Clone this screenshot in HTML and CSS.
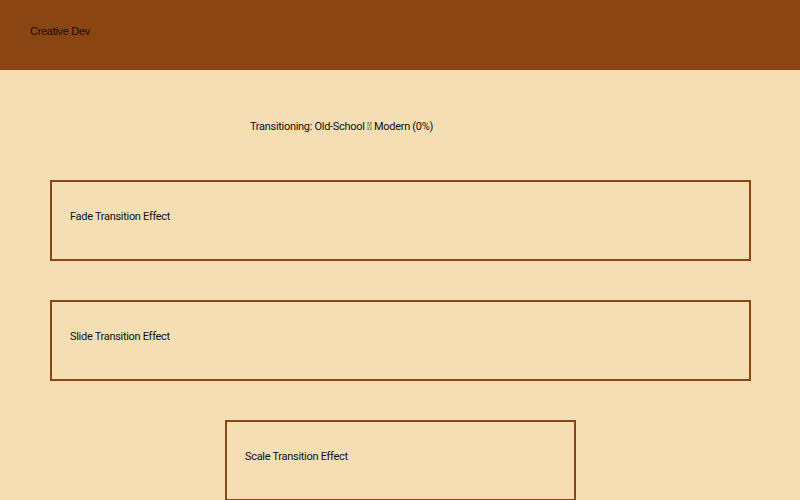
FILE: index.html
```html
<!DOCTYPE html>
<html>
<head>
<meta charset="utf-8">
<link rel="stylesheet" href="styles.css">
</head>
<body>
<header class="header"><span class="logo">Creative Dev</span></header>
<main class="main">
  <div class="status">Transitioning: Old-School &#xE000; Modern (0%)</div>
  <div class="box wide">Fade Transition Effect</div>
  <div class="box wide">Slide Transition Effect</div>
  <div class="box narrow">Scale Transition Effect</div>
</main>
</body>
</html>
```
FILE: styles.css
```css
html, body { margin: 0; padding: 0; }
body {
  background: #F5DEB3;
  font-family: Roboto, "Liberation Sans", sans-serif;
  font-size: 11px;
  letter-spacing: -0.3px;
  color: #111;
  width: 800px;
  height: 500px;
  overflow: hidden;
}
.header {
  background: #8B4513;
  height: 70px;
  box-sizing: border-box;
  padding: 25px 30px 0;
}
.logo {
  font-family: "Liberation Sans", Arial, sans-serif;
  font-size: 11px;
  color: #1a0d00;
}
.main {
  display: flex;
  flex-direction: column;
  align-items: flex-start;
}
.status {
  margin: 50px 0 0 250px;
  height: 13px;
  line-height: 13px;
}
.box {
  box-sizing: border-box;
  height: 81px;
  border: 2px solid #8B4513;
  padding: 28px 18px 0;
  line-height: 13px;
}
.wide { width: 701px; margin-left: 50px; }
.narrow { width: 351px; margin-left: 225px; }
.status + .box { margin-top: 47px; }
.box + .box { margin-top: 39px; }
```
